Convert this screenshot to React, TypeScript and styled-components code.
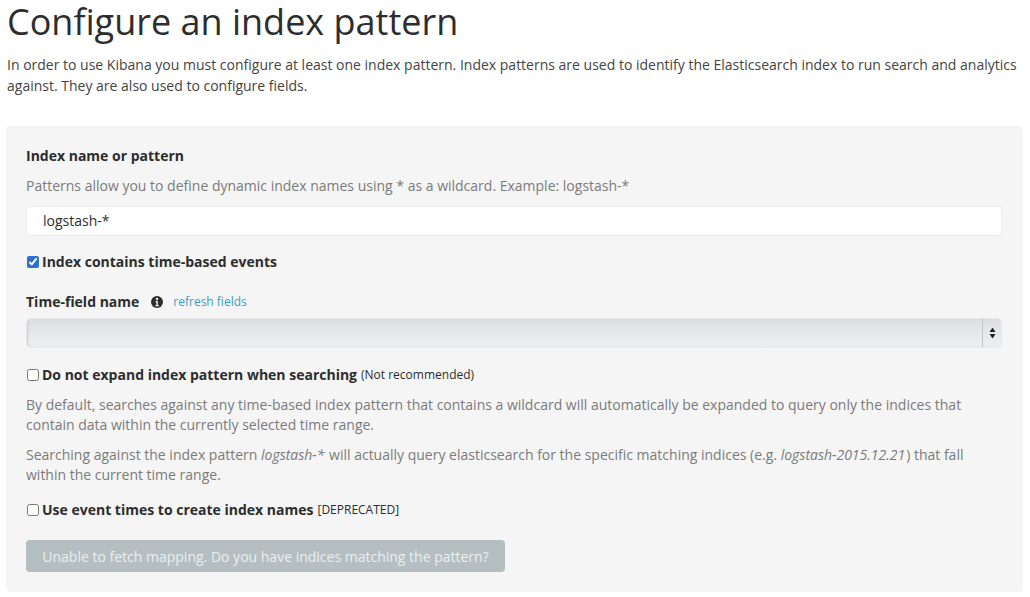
import React from "react";
import styled, { createGlobalStyle } from "styled-components";

const Global = createGlobalStyle`
  html, body { margin: 0; padding: 0; background: #fff; }
  body { font-family: "Open Sans", "Liberation Sans", sans-serif; color: #444; font-size: 14px; line-height: 20px; }
  * { box-sizing: border-box; }
`;

const Page = styled.div`
  padding: 0 7px 6px 6px;
`;

const Title = styled.h1`
  margin: 0 0 0 1px;
  font-size: 36px;
  font-weight: 400;
  line-height: 44px;
  color: #2d2d2d;
`;

const Intro = styled.p`
  margin: 10px 0 30px 1px;
  color: #444;
  font-size: 14px;
  line-height: 21px;
`;

const Panel = styled.div`
  background: #f5f5f5;
  border-radius: 4px;
  padding: 20px 21px 20px 20px;
  display: flex;
  flex-direction: column;
`;

const Label = styled.div<{ $mb?: number }>`
  font-weight: 700;
  color: #2d2d2d;
  font-size: 14px;
  line-height: 20px;
  margin-bottom: ${(p) => p.$mb ?? 0}px;
  display: flex;
  align-items: center;
`;

const Help = styled.p<{ $mb?: number }>`
  margin: 0 0 ${(p) => p.$mb ?? 10}px 0;
  color: #7b7b7b;
  font-size: 14px;
  line-height: 20px;
`;

const TextInput = styled.div`
  height: 30px;
  background: #fff;
  border: 1px solid #ebebeb;
  border-radius: 4px;
  padding: 0 16px;
  display: flex;
  align-items: center;
  color: #2d2d2d;
  font-size: 14px;
  margin-bottom: 16px;
`;

const CheckRow = styled.label<{ $mb: number }>`
  display: flex;
  align-items: center;
  font-size: 14px;
  line-height: 20px;
  margin-bottom: ${(p) => p.$mb}px;
  color: #2d2d2d;
`;

const Box = styled.input`
  margin: 0 3px 0 1px;
  width: 12px;
  height: 12px;
  accent-color: #2f6fd0;
`;

const Bold = styled.span`
  font-weight: 700;
`;

const Note = styled.span`
  font-weight: 400;
  font-size: 12px;
  margin-left: 4px;
  color: #2d2d2d;
`;

const Info = styled.svg`
  margin-left: 12px;
  margin-right: 10px;
`;

const Link = styled.a`
  color: #3a9ec4;
  font-weight: 400;
  font-size: 12px;
  text-decoration: none;
`;

const Select = styled.div`
  height: 30px;
  border: 1px solid #e6e8e9;
  border-radius: 5px;
  background: linear-gradient(#dcdfe0, #e6e8e9 50%, #eceeef);
  box-shadow: inset 2px 0 2px -1px #c9cccd;
  display: flex;
  justify-content: flex-end;
  margin-bottom: 17px;
`;

const SelectArrow = styled.div`
  width: 19px;
  border-left: 1px solid #c2c5c6;
  display: flex;
  align-items: center;
  justify-content: center;
`;

const Em = styled.em`
  font-style: italic;
  padding-right: 1px;
`;

const Button = styled.button`
  align-self: flex-start;
  height: 32px;
  width: 479px;
  border: none;
  border-radius: 4px;
  background: #b5bfc1;
  color: #e9eeef;
  font-family: inherit;
  font-size: 14px;
  padding: 0;
  margin-top: 20px;
`;

export default function App() {
  return (
    <Page>
      <Global />
      <Title>Configure an index pattern</Title>
      <Intro>
        In order to use Kibana you must configure at least one index pattern. Index patterns are used to identify the
        Elasticsearch index to run search and analytics against. They are also used to configure fields.
      </Intro>
      <Panel>
        <Label $mb={10}>Index name or pattern</Label>
        <Help>Patterns allow you to define dynamic index names using * as a wildcard. Example: logstash-*</Help>
        <TextInput>logstash-*</TextInput>
        <CheckRow $mb={20}>
          <Box type="checkbox" defaultChecked />
          <Bold>Index contains time-based events</Bold>
        </CheckRow>
        <Label $mb={6}>
          Time-field name
          <Info width="12" height="12" viewBox="0 0 12 12">
            <circle cx="6" cy="6" r="6" fill="#2d2d2d" />
            <circle cx="6" cy="3" r="1.2" fill="#f5f5f5" />
            <path d="M4.6 5h2.2v4h0.9v1.2H4.5V9h0.9V6.2h-0.8z" fill="#f5f5f5" />
          </Info>
          <Link href="#">refresh fields</Link>
        </Label>
        <Select>
          <SelectArrow>
            <svg width="7" height="12" viewBox="0 0 7 12">
              <path d="M3.5 0.5L6.5 5H0.5z" fill="#222" />
              <path d="M3.5 11.5L6.5 7H0.5z" fill="#222" />
            </svg>
          </SelectArrow>
        </Select>
        <CheckRow $mb={10}>
          <Box type="checkbox" />
          <Bold>Do not expand index pattern when searching</Bold>
          <Note>(Not recommended)</Note>
        </CheckRow>
        <Help>
          By default, searches against any time-based index pattern that contains a wildcard will automatically be
          expanded to query only the indices that contain data within the currently selected time range.
        </Help>
        <Help $mb={15}>
          Searching against the index pattern <Em>logstash-*</Em> will actually query elasticsearch for the specific
          matching indices (e.g. <Em>logstash-2015.12.21</Em>) that fall within the current time range.
        </Help>
        <CheckRow $mb={0}>
          <Box type="checkbox" />
          <Bold>Use event times to create index names</Bold>
          <Note>[DEPRECATED]</Note>
        </CheckRow>
        <Button disabled>Unable to fetch mapping. Do you have indices matching the pattern?</Button>
      </Panel>
    </Page>
  );
}
